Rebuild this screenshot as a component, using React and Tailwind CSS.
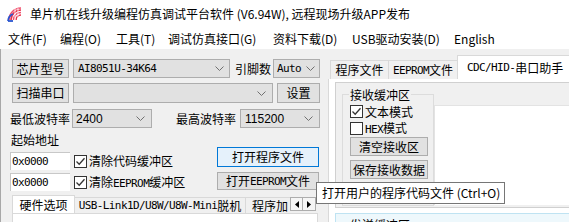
import React from "react";

function Chevron() {
  return (
    <svg width="9" height="5" viewBox="0 0 9 5" className="shrink-0">
      <path d="M0.5 0.5 L4.5 4.5 L8.5 0.5" fill="none" stroke="#707070" strokeWidth="1" />
    </svg>
  );
}

function Check({ checked }) {
  return (
    <div className="flex h-[13px] w-[13px] shrink-0 items-center justify-center border border-[#333333] bg-white">
      {checked ? (
        <svg width="11" height="11" viewBox="0 0 11 11">
          <path d="M1.5 5.5 L4.2 8.2 L9.5 2.2" fill="none" stroke="#333333" strokeWidth="1.3" />
        </svg>
      ) : null}
    </div>
  );
}

function Logo() {
  return (
    <svg width="16" height="16" viewBox="0 0 16 16" className="shrink-0">
      <path d="M2 14 A12 12 0 0 1 14 2" fill="none" stroke="#f0506e" strokeWidth="1.6" />
      <path d="M4 14 A10 10 0 0 1 14 4" fill="none" stroke="#e8304a" strokeWidth="1.6" />
      <path d="M6.5 14 A7.5 7.5 0 0 1 14 6.5" fill="none" stroke="#f0506e" strokeWidth="1.6" />
      <path d="M9 14 A5 5 0 0 1 14 9" fill="none" stroke="#e8304a" strokeWidth="1.6" />
      <path d="M8 2 L8 14 M11 2 L11 14" stroke="#ffffff" strokeWidth="0.8" />
      <path d="M1 15 A8 8 0 0 1 6 8" fill="none" stroke="#2a55d0" strokeWidth="1.8" />
      <path d="M1 15 L6 15" stroke="#2a55d0" strokeWidth="1.8" />
    </svg>
  );
}

export default function App() {
  return (
    <div className="relative h-[222px] w-[569px] overflow-hidden bg-[#f0f0f0] font-['Noto_Sans_CJK_SC',sans-serif] text-[12px] text-black">
      {/* Title bar */}
      <div className="flex h-[28px] items-center bg-white pl-[7px]">
        <Logo />
        <span className="ml-[7px] text-[12px] leading-none">
          单片机在线升级编程仿真调试平台软件 (V6.94W), 远程现场升级APP发布
        </span>
      </div>
      {/* Menu bar */}
      <div className="flex h-[21px] items-center bg-white pl-[8px] text-[12px] leading-none">
        <span className="w-[52px]">文件(F)</span>
        <span className="w-[56px]">编程(O)</span>
        <span className="w-[52px]">工具(T)</span>
        <span className="w-[105px]">调试仿真接口(G)</span>
        <span className="w-[79px]">资料下载(D)</span>
        <span className="w-[102px]">USB驱动安装(D)</span>
        <span>English</span>
      </div>

      {/* Body */}
      <div className="flex h-[173px]">
        {/* Left panel */}
        <div className="flex w-[326px] shrink-0 flex-col border-l border-[#a8a8a8] pt-[10px]">
          {/* Row 1 */}
          <div className="flex h-[19px] items-stretch">
            <div className="ml-[11px] flex w-[57px] items-center justify-center border border-[#adadad] bg-[#e1e1e1] leading-none">芯片型号</div>
            <div className="ml-[4px] flex w-[157px] items-center justify-between border border-[#adadad] bg-[#e1e1e1] pl-[4px] pr-[5px]">
              <span className="font-['DejaVu_Sans_Mono',monospace] text-[11px] leading-none tracking-[-0.6px]">AI8051U-34K64</span>
              <Chevron />
            </div>
            <div className="ml-[5px] flex w-[38px] items-center leading-none">引脚数</div>
            <div className="flex w-[47px] items-center justify-between border border-[#adadad] bg-[#e1e1e1] pl-[3px] pr-[4px]">
              <span className="font-['DejaVu_Sans_Mono',monospace] text-[11px] leading-none tracking-[-0.6px]">Auto</span>
              <Chevron />
            </div>
          </div>
          {/* Row 2 */}
          <div className="mt-[5px] flex h-[20px] items-stretch">
            <div className="ml-[11px] flex w-[57px] items-center justify-center border border-[#adadad] bg-[#e1e1e1] leading-none">扫描串口</div>
            <div className="ml-[4px] flex w-[200px] items-center justify-end border border-[#adadad] bg-[#e1e1e1] pr-[6px]">
              <Chevron />
            </div>
            <div className="ml-[4px] flex w-[43px] items-center justify-center border border-[#adadad] bg-[#e1e1e1] leading-none">设置</div>
          </div>
          {/* Row 3 */}
          <div className="mt-[6px] flex h-[19px] items-stretch">
            <div className="ml-[9px] flex w-[62px] items-center leading-none">最低波特率</div>
            <div className="flex w-[80px] items-center justify-between border border-[#adadad] bg-[#e1e1e1] pl-[3px] pr-[6px]">
              <span className="font-['Liberation_Sans',sans-serif] text-[12px] leading-none">2400</span>
              <Chevron />
            </div>
            <div className="ml-[24px] flex w-[64px] items-center leading-none">最高波特率</div>
            <div className="flex w-[80px] items-center justify-between border border-[#adadad] bg-[#e1e1e1] pl-[4px] pr-[6px]">
              <span className="font-['Liberation_Sans',sans-serif] text-[12px] leading-none">115200</span>
              <Chevron />
            </div>
          </div>
          {/* Address / buttons block */}
          <div className="mt-[4px] flex">
            <div className="ml-[9px] flex w-[207px] flex-col">
              <div className="h-[15px] pl-[1px] leading-[15px]">起始地址</div>
              <div className="mt-[5px] flex h-[18px] items-center">
                <div className="flex h-[18px] w-[60px] items-center border-l border-t border-[#c8c8c8] bg-white pl-[1px]">
                  <span className="font-['DejaVu_Sans_Mono',monospace] text-[11px] leading-none tracking-[-0.6px]">0x0000</span>
                </div>
                <div className="ml-[4px]"><Check checked /></div>
                <span className="ml-[2px] leading-none">清除代码缓冲区</span>
              </div>
              <div className="mt-[3px] flex h-[18px] items-center">
                <div className="flex h-[18px] w-[60px] items-center border-l border-t border-[#c8c8c8] bg-white pl-[1px]">
                  <span className="font-['DejaVu_Sans_Mono',monospace] text-[11px] leading-none tracking-[-0.6px]">0x0000</span>
                </div>
                <div className="ml-[4px]"><Check checked /></div>
                <span className="ml-[2px] leading-none">
                  清除<span className="font-['DejaVu_Sans_Mono',monospace] text-[11px] leading-none tracking-[-0.6px]">EEPROM</span>缓冲区
                </span>
              </div>
            </div>
            <div className="flex flex-col">
              <div className="mt-[15px] flex h-[20px] w-[102px] items-center justify-center border border-[#0078d7] bg-[#e5f1fb] leading-none">打开程序文件</div>
              <div className="mt-[5px] flex h-[18px] w-[102px] items-center justify-center border border-[#adadad] bg-[#e1e1e1] leading-none">
                打开<span className="font-['DejaVu_Sans_Mono',monospace] text-[11px] leading-none tracking-[-0.6px]">EEPROM</span>文件
              </div>
            </div>
          </div>
          {/* Bottom tabs */}
          <div className="ml-[11px] mt-[4px] flex h-[18px] items-end">
            <div className="flex h-[18px] w-[63px] items-center justify-center border-l border-r border-t border-[#d9d9d9] bg-white leading-none">硬件选项</div>
            <div className="flex h-[16px] w-[171px] items-center justify-center border-r border-t border-[#d9d9d9] bg-[#f0f0f0] leading-none">
              <span className="font-['DejaVu_Sans_Mono',monospace] text-[11px] leading-none tracking-[-0.6px]">USB-Link1D/U8W/U8W-Mini</span>脱机
            </div>
            <div className="flex h-[16px] w-[44px] items-center overflow-hidden whitespace-nowrap border-t border-[#d9d9d9] bg-[#f0f0f0] pl-[6px] leading-none">程序加</div>
            <div className="mb-[2px] flex">
              <div className="flex h-[14px] w-[13px] items-center justify-center border border-[#adadad] bg-[#f5f5f5]">
                <svg width="4" height="7" viewBox="0 0 4 7"><path d="M4 0 L0 3.5 L4 7 Z" fill="#000" /></svg>
              </div>
              <div className="flex h-[14px] w-[13px] items-center justify-center border border-l-0 border-[#adadad] bg-[#f5f5f5]">
                <svg width="4" height="7" viewBox="0 0 4 7"><path d="M0 0 L4 3.5 L0 7 Z" fill="#000" /></svg>
              </div>
            </div>
          </div>
          <div className="ml-[11px] w-[306px] flex-1 border-l border-r border-t border-[#d9d9d9] bg-white" />
        </div>

        {/* Right panel */}
        <div className="flex flex-1 flex-col pl-[2px] pt-[6px]">
          <div className="flex h-[24px] items-end pl-[2px]">
            <div className="flex h-[19px] w-[58px] items-center justify-center border-l border-t border-[#d9d9d9] bg-[#f0f0f0] leading-none">程序文件</div>
            <div className="flex h-[19px] w-[69px] items-center justify-center border-l border-t border-[#d9d9d9] bg-[#f0f0f0] leading-none">
              <span className="font-['DejaVu_Sans_Mono',monospace] text-[11px] leading-none tracking-[-0.6px]">EEPROM</span>文件
            </div>
            <div className="flex h-[24px] flex-1 items-center border-l border-t border-[#d9d9d9] bg-white pl-[9px] leading-none">
              <span className="font-['DejaVu_Sans_Mono',monospace] text-[11px] leading-none tracking-[-0.6px]">CDC/HID-</span>串口助手
            </div>
          </div>
          <div className="flex flex-1 flex-col border-l border-[#d9d9d9] bg-white pl-[6px] pt-[3px]">
            <div className="flex h-[126px] border-b border-l border-t border-[#d0d0d0] bg-[#f0f0f0]">
              <fieldset className="ml-[6px] mt-[5px] h-[118px] w-[92px] shrink-0 border border-[#dcdcdc]">
                <legend className="ml-[6px] px-[1px] text-[12px] leading-[13px]">接收缓冲区</legend>
                <div className="ml-[7px] mt-[4px] flex h-[13px] items-center">
                  <Check checked />
                  <span className="ml-[2px] leading-none">文本模式</span>
                </div>
                <div className="ml-[7px] mt-[4px] flex h-[13px] items-center">
                  <Check />
                  <span className="ml-[2px] whitespace-nowrap leading-none">
                    <span className="font-['DejaVu_Sans_Mono',monospace] text-[11px] leading-none tracking-[-0.6px]">HEX</span>模式
                  </span>
                </div>
                <div className="ml-[7px] mt-[2px] flex h-[19px] w-[78px] items-center justify-center border border-[#adadad] bg-[#e1e1e1] leading-none">清空接收区</div>
                <div className="ml-[7px] mt-[4px] flex h-[19px] w-[78px] items-center justify-center border border-[#adadad] bg-[#e1e1e1] leading-none">保存接收数据</div>
              </fieldset>
              <div className="mt-[22px] h-[100px] flex-1 border-l border-t border-[#e3e3e3] bg-white" />
            </div>
            <div className="mt-[5px] flex-1 border-l border-t border-[#bfe3f2] bg-[#eef8fc] pl-[14px] pt-[5px] leading-[12px]">发送缓冲区</div>
          </div>
        </div>
      </div>

      {/* Tooltip */}
      <div className="absolute left-[316px] top-[182px] flex h-[22px] w-[189px] items-center border border-[#767676] bg-white pl-[5px] text-[12px] leading-none">
        打开用户的程序代码文件 (Ctrl+O)
      </div>
    </div>
  );
}
